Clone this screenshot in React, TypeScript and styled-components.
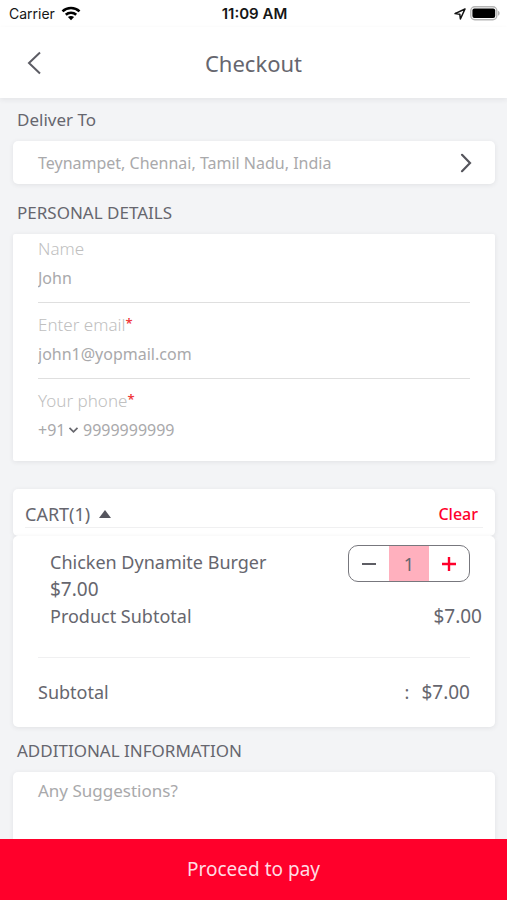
import React, { useState } from "react";
import styled, { createGlobalStyle } from "styled-components";

const color = {
  text: "#66666e",
  muted: "#a9a9ab",
  faint: "#c0c0c0",
  line: "#dfdfdf",
  softLine: "#f0f0f1",
  page: "#f3f4f6",
  red: "#ff002b",
};

const GlobalStyle = createGlobalStyle`
  *, *::before, *::after { box-sizing: border-box; }
  body { margin: 0; background: ${color.page}; }
  body, button, input, select, textarea {
    font-family: "Noto Sans", "Open Sans", sans-serif;
    color: ${color.text};
  }
  button, input, select, textarea {
    margin: 0;
    padding: 0;
    border: 0;
    background: none;
    outline-offset: 2px;
  }
  button { cursor: pointer; }
`;

const Screen = styled.div`
  display: flex;
  flex-direction: column;
  height: 100vh;
`;

const StatusBar = styled.div`
  display: grid;
  grid-template-columns: 1fr auto 1fr;
  align-items: center;
  flex: none;
  height: 27px;
  padding: 0 7px 0 9px;
  background: #fff;
  color: #161616;
  font-family: Inter, "Liberation Sans", sans-serif;
  font-size: 14px;
`;

const StatusGroup = styled.div<{ $end?: boolean }>`
  display: flex;
  align-items: center;
  justify-content: ${(p) => (p.$end ? "flex-end" : "flex-start")};
  gap: ${(p) => (p.$end ? 4 : 6)}px;
`;

const Clock = styled.time`
  font-size: 15px;
  font-weight: 600;
`;

const Header = styled.header`
  display: grid;
  grid-template-columns: 48px 1fr 48px;
  align-items: center;
  flex: none;
  height: 71px;
  padding: 0 10px;
  background: #fff;
  box-shadow: 0 2px 5px rgba(40, 40, 60, 0.07);
  z-index: 1;
`;

const BackButton = styled.button`
  display: flex;
  align-items: center;
  justify-content: center;
  height: 48px;
`;

const Title = styled.h1`
  margin: 0;
  text-align: center;
  font-size: 22px;
  line-height: 30px;
  font-weight: 400;
`;

const Content = styled.main`
  flex: 1;
  min-height: 0;
  overflow-y: auto;
  scrollbar-width: none;
  padding: 10px 12px 24px 13px;
`;

const Heading = styled.h2<{ $top?: number }>`
  margin: ${(p) => p.$top ?? 0}px 4px 9px;
  font-size: 17px;
  line-height: 24px;
  font-weight: 400;
`;

const Card = styled.section<{ $top?: number }>`
  margin-top: ${(p) => p.$top ?? 0}px;
  border-radius: 5px;
  background: #fff;
  box-shadow: 0 1px 5px rgba(40, 40, 60, 0.09);
`;

const AddressButton = styled.button`
  display: flex;
  align-items: center;
  justify-content: space-between;
  width: 100%;
  height: 43px;
  padding: 0 22px 0 25px;
  border-radius: 5px;
  background: #fff;
  box-shadow: 0 1px 5px rgba(40, 40, 60, 0.09);
  color: ${color.muted};
  font-size: 16px;
  text-align: left;
`;

const FormCard = styled(Card)`
  display: flex;
  flex-direction: column;
  gap: 7px;
  padding: 0 25px 17px;
  border-radius: 2px;
`;

const Field = styled.div<{ $line?: boolean }>`
  padding-bottom: ${(p) => (p.$line ? 10 : 0)}px;
  border-bottom: ${(p) => (p.$line ? `1px solid ${color.line}` : "0")};
`;

const Label = styled.label`
  display: flex;
  color: ${color.faint};
  font-size: 17px;
  line-height: 30px;
  font-weight: 300;
`;

const Required = styled.span`
  color: #ef3b3b;
  font-size: 13px;
  line-height: 26px;
  font-weight: 600;
`;

const Input = styled.input`
  display: block;
  flex: 1;
  width: 100%;
  min-width: 0;
  height: 28px;
  color: ${color.muted};
  font-size: 16px;
`;

const PhoneRow = styled.div`
  display: flex;
  align-items: center;
  gap: 4px;
`;

const CodeBox = styled.div`
  display: flex;
  align-items: center;
  gap: 2px;
`;

const CodeSelect = styled.select`
  appearance: none;
  height: 28px;
  color: ${color.muted};
  font-size: 16px;
`;

const CartHeadCard = styled(Card)`
  padding: 0 12px 8px;
`;

const CartHead = styled.div`
  display: flex;
  align-items: center;
  justify-content: space-between;
  height: 39px;
  padding-top: 11px;
  border-bottom: 1px solid ${color.softLine};
`;

const CartToggle = styled.button`
  display: flex;
  align-items: center;
  gap: 9px;
  font-size: 18px;
  line-height: 24px;
`;

const ClearButton = styled.button`
  padding-right: 5px;
  color: ${color.red};
  font-size: 16px;
  line-height: 24px;
  font-weight: 500;
`;

const CartBody = styled(Card)`
  padding: 9px 25px 21px;
`;

const Item = styled.div`
  display: flex;
  align-items: flex-start;
  justify-content: space-between;
  padding-left: 12px;
`;

const ItemText = styled.div`
  padding-top: 4px;
  font-size: 18px;
  line-height: 27px;
`;

const Stepper = styled.div`
  display: grid;
  grid-template-columns: 40px 40px 40px;
  height: 37px;
  border: 1px solid #77777d;
  border-radius: 10px;
  overflow: hidden;
`;

const StepButton = styled.button`
  display: flex;
  align-items: center;
  justify-content: center;
`;

const Quantity = styled.output`
  display: flex;
  align-items: center;
  justify-content: center;
  background: #ffb0be;
  font-size: 18px;
`;

const ProductTotal = styled.div`
  display: flex;
  justify-content: space-between;
  margin: 0 -12px 0 12px;
  padding-bottom: 27px;
  font-size: 18px;
  line-height: 27px;
`;

const Subtotal = styled.div`
  display: flex;
  justify-content: space-between;
  padding-top: 21px;
  border-top: 1px solid ${color.softLine};
  font-size: 18px;
  line-height: 27px;
`;

const Price = styled.span`
  font-size: 19px;
`;

const Amount = styled.span`
  display: flex;
  gap: 12px;
`;

const Notes = styled.textarea`
  display: block;
  width: 100%;
  height: 110px;
  padding: 7px 25px;
  border-radius: 5px;
  resize: none;
  font-size: 17px;
  line-height: 24px;
  &::placeholder { color: ${color.muted}; opacity: 1; }
`;

const PayButton = styled.button`
  flex: none;
  height: 61px;
  padding-bottom: 2px;
  background: ${color.red};
  color: #ffdce2;
  font-size: 19px;
`;

const WifiIcon = () => (
  <svg width="20" height="15" viewBox="0 0 20 15" aria-hidden="true">
    <g fill="none" stroke="#000" strokeWidth="2.6">
      <path d="M1.5 5.4C6.2 .9 13.8 .9 18.5 5.4" />
      <path d="M4.8 8.8C7.7 6.1 12.3 6.1 15.2 8.8" />
    </g>
    <path d="M10 14.2 6.9 11c1.8-1.5 4.4-1.5 6.2 0z" fill="#000" />
  </svg>
);

const LocationIcon = () => (
  <svg width="12" height="12" viewBox="0 0 12 12" aria-hidden="true">
    <path d="M11 1 1 5.6l4.8.6.6 4.8z" fill="none" stroke="#111" strokeWidth="1.5" strokeLinejoin="round" />
  </svg>
);

const BatteryIcon = () => (
  <svg width="30" height="15" viewBox="0 0 30 15" aria-hidden="true">
    <rect x=".8" y=".8" width="26" height="13" rx="4" fill="#fff" stroke="#b5b5b5" strokeWidth="1.4" />
    <rect x="2.4" y="2.6" width="22.8" height="9.4" rx="2" fill="#000" />
    <path d="M28 4.8c2.2.8 2.2 4.2 0 5z" fill="#b5b5b5" />
  </svg>
);

export default function App() {
  const [open, setOpen] = useState(true);
  const [quantity, setQuantity] = useState(1);
  const price = 7;
  const total = `$${(price * quantity).toFixed(2)}`;

  return (
    <Screen>
      <GlobalStyle />
      <StatusBar>
        <StatusGroup>
          <span>Carrier</span>
          <WifiIcon />
        </StatusGroup>
        <Clock>11:09 AM</Clock>
        <StatusGroup $end>
          <LocationIcon />
          <BatteryIcon />
        </StatusGroup>
      </StatusBar>
      <Header>
        <BackButton aria-label="Back">
          <svg width="14" height="24" viewBox="0 0 14 24" aria-hidden="true">
            <path d="M13 1.5 2 12l11 10.5" fill="none" stroke="#5c5c64" strokeWidth="2" />
          </svg>
        </BackButton>
        <Title>Checkout</Title>
      </Header>

      <Content>
        <Heading>Deliver To</Heading>
        <AddressButton>
          <span>Teynampet, Chennai, Tamil Nadu, India</span>
          <svg width="14" height="20" viewBox="0 0 14 20" aria-hidden="true">
            <path d="M3 1.8 11 10l-8 8.2" fill="none" stroke="#55555c" strokeWidth="2.2" strokeLinecap="round" />
          </svg>
        </AddressButton>

        <Heading $top={17}>PERSONAL DETAILS</Heading>
        <FormCard>
          <Field $line>
            <Label htmlFor="name">Name</Label>
            <Input id="name" defaultValue="John" />
          </Field>
          <Field $line>
            <Label htmlFor="email">
              Enter email<Required>*</Required>
            </Label>
            <Input id="email" type="email" defaultValue="john1@yopmail.com" />
          </Field>
          <Field>
            <Label htmlFor="phone">
              Your phone<Required>*</Required>
            </Label>
            <PhoneRow>
              <CodeBox>
                <CodeSelect aria-label="Country code" defaultValue="+91">
                  <option>+91</option>
                </CodeSelect>
                <svg width="11" height="8" viewBox="0 0 11 8" aria-hidden="true">
                  <path d="M1.5 1.8 5.5 5.8l4-4" fill="none" stroke="#68686e" strokeWidth="1.7" />
                </svg>
              </CodeBox>
              <Input id="phone" type="tel" defaultValue="9999999999" />
            </PhoneRow>
          </Field>
        </FormCard>

        <CartHeadCard $top={28}>
          <CartHead>
            <CartToggle aria-expanded={open} onClick={() => setOpen(!open)}>
              CART({quantity > 0 ? 1 : 0})
              <svg width="12" height="8" viewBox="0 0 12 8" aria-hidden="true">
                <path d={open ? "M0 8 6 0l6 8z" : "M0 0h12L6 8z"} fill="#55555e" />
              </svg>
            </CartToggle>
            <ClearButton onClick={() => setQuantity(0)}>Clear</ClearButton>
          </CartHead>
        </CartHeadCard>
        {open && (
          <CartBody>
            <Item>
              <ItemText>
                <div>Chicken Dynamite Burger</div>
                <Price>$7.00</Price>
              </ItemText>
              <Stepper>
                <StepButton aria-label="Decrease quantity" onClick={() => setQuantity(Math.max(0, quantity - 1))}>
                  <svg width="16" height="16" viewBox="0 0 16 16" aria-hidden="true">
                    <path d="M1 8h14" stroke="#5d5d64" strokeWidth="2" />
                  </svg>
                </StepButton>
                <Quantity>{quantity}</Quantity>
                <StepButton aria-label="Increase quantity" onClick={() => setQuantity(quantity + 1)}>
                  <svg width="16" height="16" viewBox="0 0 16 16" aria-hidden="true">
                    <path d="M1 8h14M8 1v14" stroke={color.red} strokeWidth="2.4" />
                  </svg>
                </StepButton>
              </Stepper>
            </Item>
            <ProductTotal>
              <span>Product Subtotal</span>
              <Price>{total}</Price>
            </ProductTotal>
            <Subtotal>
              <span>Subtotal</span>
              <Amount>
                <span>:</span>
                <Price>{total}</Price>
              </Amount>
            </Subtotal>
          </CartBody>
        )}

        <Heading $top={12}>
          <label htmlFor="notes">ADDITIONAL INFORMATION</label>
        </Heading>
        <Card>
          <Notes id="notes" placeholder="Any Suggestions?" />
        </Card>
      </Content>
      <PayButton>Proceed to pay</PayButton>
    </Screen>
  );
}
